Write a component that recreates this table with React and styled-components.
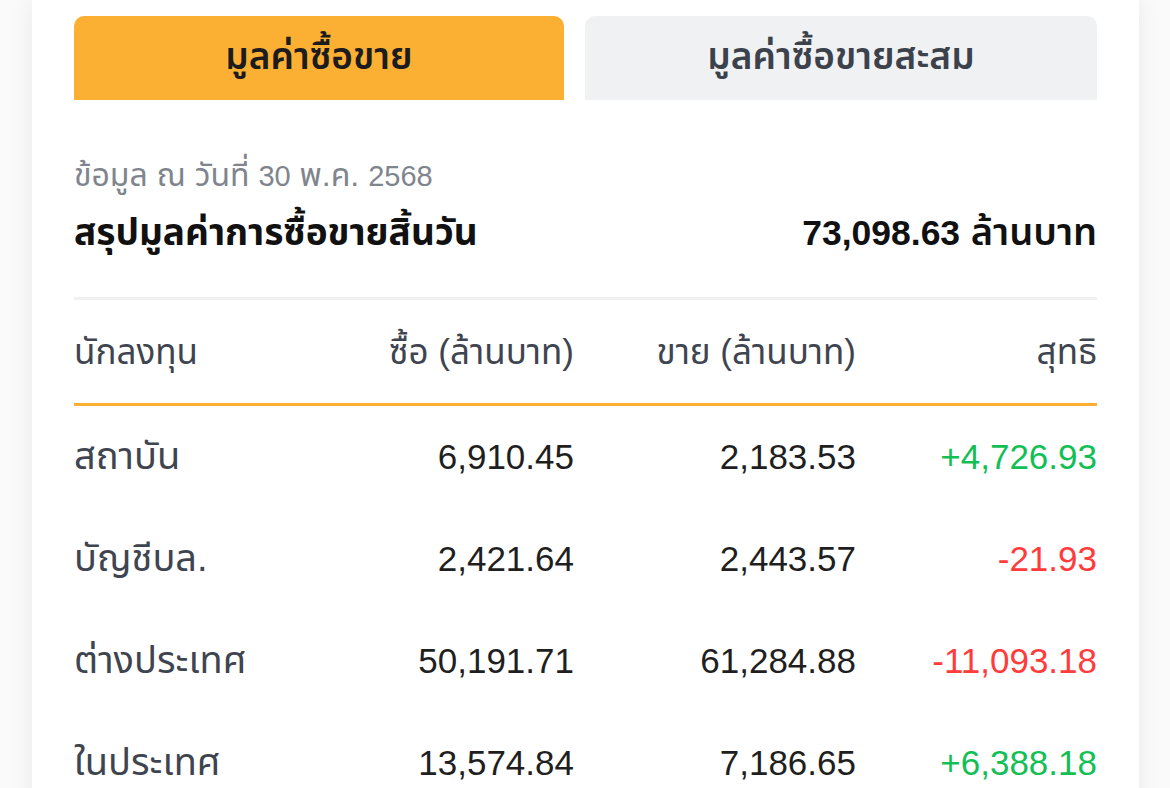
import styled, { createGlobalStyle } from 'styled-components';

const GlobalStyle = createGlobalStyle`
  html, body {
    margin: 0;
    padding: 0;
    background: #fafafa;
  }
  body {
    font-family: 'Liberation Sans', 'Noto Sans Thai', 'Noto Sans Thai Looped', 'Noto Sans', sans-serif;
  }
`;

const rows = [
  { name: 'สถาบัน', buy: '6,910.45', sell: '2,183.53', net: '+4,726.93' },
  { name: 'บัญชีบล.', buy: '2,421.64', sell: '2,443.57', net: '-21.93' },
  { name: 'ต่างประเทศ', buy: '50,191.71', sell: '61,284.88', net: '-11,093.18' },
  { name: 'ในประเทศ', buy: '13,574.84', sell: '7,186.65', net: '+6,388.18' },
];

const App = () => {
  return (
    <>
      <GlobalStyle />
      <Card>
        <Tabs>
          <Tab $active>มูลค่าซื้อขาย</Tab>
          <Tab>มูลค่าซื้อขายสะสม</Tab>
        </Tabs>

        <Summary>
          <DateLine>
            ข้อมูล ณ วันที่ <Digits $size={29}>30</Digits> พ.ค. <Digits $size={29}>2568</Digits>
          </DateLine>
          <TotalRow>
            <TotalLabel>สรุปมูลค่าการซื้อขายสิ้นวัน</TotalLabel>
            <TotalValue>
              <Digits $size={35.5}>73,098.63</Digits> ล้านบาท
            </TotalValue>
          </TotalRow>
        </Summary>

        <Table>
          <HeadRow>
            <HeadCell>นักลงทุน</HeadCell>
            <HeadCell $right>ซื้อ (ล้านบาท)</HeadCell>
            <HeadCell $right>ขาย (ล้านบาท)</HeadCell>
            <HeadCell $right>สุทธิ</HeadCell>
          </HeadRow>
          {rows.map((r) => (
            <Row key={r.name}>
              <Name>{r.name}</Name>
              <Num>{r.buy}</Num>
              <Num>{r.sell}</Num>
              <Num $tone={r.net.startsWith('-') ? 'down' : 'up'}>{r.net}</Num>
            </Row>
          ))}
        </Table>
      </Card>
    </>
  );
};

export default App;

const Card = styled.div`
  margin: 0 31px 0 32px;
  padding: 16px 42px 0;
  min-height: 788px;
  box-sizing: border-box;
  background: #fff;
  box-shadow: 0 0 22px rgba(0, 0, 0, 0.07);
`;

const Tabs = styled.div`
  display: grid;
  grid-template-columns: 490px 1fr;
  gap: 21px;
`;

const Tab = styled.div`
  height: 84px;
  display: flex;
  align-items: center;
  justify-content: center;
  border-radius: 10px 10px 0 0;
  background: ${({ $active }) => ($active ? '#fbb034' : '#f0f1f3')};
  color: ${({ $active }) => ($active ? '#1c1c1e' : '#3c424c')};
  font-size: 37px;
  font-weight: 600;
  padding-bottom: 1px;
  box-sizing: border-box;
`;

const Digits = styled.span`
  font-family: 'Liberation Sans', sans-serif;
  font-size: ${({ $size }) => $size}px;
`;

const Summary = styled.div`
  padding: 55px 0 42px;
  border-bottom: 3px solid #f1f1f1;
`;

const DateLine = styled.div`
  color: #80858d;
  font-size: 32px;
  line-height: 40px;
`;

const TotalRow = styled.div`
  display: flex;
  justify-content: space-between;
  align-items: center;
  margin-top: 14px;
  line-height: 44px;
  color: #111;
`;

const TotalLabel = styled.div`
  font-size: 37px;
  font-weight: 700;
`;

const TotalValue = styled.div`
  font-size: 38px;
  font-weight: 600;
`;

const Table = styled.div`
  display: flex;
  flex-direction: column;
`;

const Grid = styled.div`
  display: grid;
  grid-template-columns: 270px 230px 282px 1fr;
  align-items: center;
`;

const HeadRow = styled(Grid)`
  height: 106px;
  padding-top: 3px;
  border-bottom: 3px solid #fbb034;
  box-sizing: border-box;
`;

const HeadCell = styled.div`
  color: #3f4550;
  font-size: 35px;
  text-align: ${({ $right }) => ($right ? 'right' : 'left')};
`;

const Row = styled(Grid)`
  height: 102px;
`;

const Name = styled.div`
  color: #3f4550;
  font-size: 38px;
`;

const Num = styled.div`
  text-align: right;
  font-size: 35px;
  color: ${({ $tone }) => ($tone === 'up' ? '#13bf55' : $tone === 'down' ? '#ff3b3b' : '#1f1f21')};
`;
